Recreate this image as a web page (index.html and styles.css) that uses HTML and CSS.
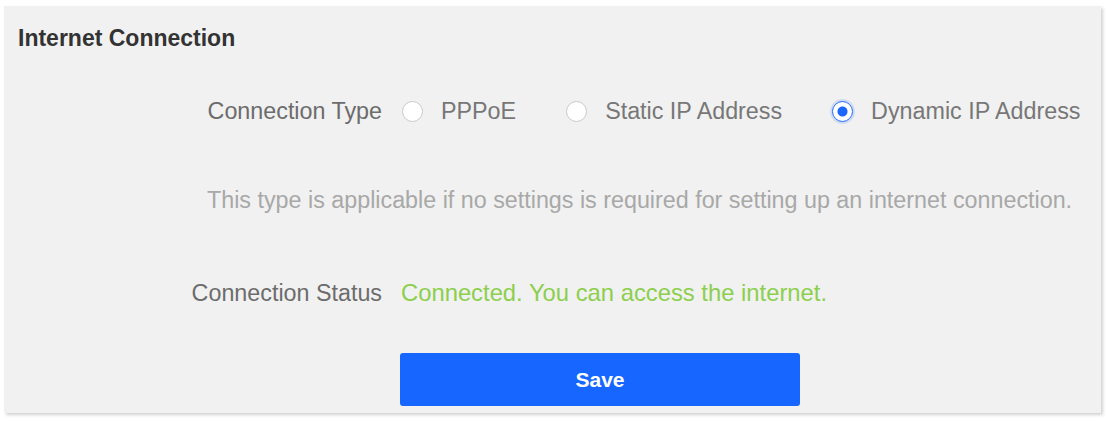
FILE: index.html
```html
<!DOCTYPE html>
<html lang="en">
<head>
    <meta charset="UTF-8">
    <meta name="viewport" content="width=device-width, initial-scale=1.0">
    <title>Internet Connection</title>
    <link rel="stylesheet" href="styles.css">
</head>
<body>
    <div class="panel">
        <h2 class="title">Internet Connection</h2>

        <div class="row">
            <span class="label">Connection Type</span>
            <div class="options">
                <label class="option">
                    <span class="radio"></span>
                    <span>PPPoE</span>
                </label>
                <label class="option">
                    <span class="radio"></span>
                    <span>Static IP Address</span>
                </label>
                <label class="option">
                    <span class="radio checked"></span>
                    <span>Dynamic IP Address</span>
                </label>
            </div>
        </div>

        <p class="hint">This type is applicable if no settings is required for setting up an internet connection.</p>

        <div class="row status-row">
            <span class="label">Connection Status</span>
            <span class="status">Connected. You can access the internet.</span>
        </div>

        <div class="actions">
            <button class="save">Save</button>
        </div>
    </div>
</body>
</html>
```

FILE: styles.css
```css
body {
    margin: 0;
    padding: 0;
    background: #fff;
    font-family: 'Liberation Sans', Arial, sans-serif;
}

.panel {
    margin: 6px 5px 8px 4px;
    height: 407px;
    box-sizing: border-box;
    padding-top: 19px;
    background: #f1f1f1;
    box-shadow: 2px 2px 3px rgba(0, 0, 0, 0.18);
}

.title {
    margin: 0 0 0 14px;
    font-size: 23px;
    line-height: 26px;
    font-weight: bold;
    color: #333;
}

.row {
    display: flex;
    align-items: center;
    height: 26px;
    margin-top: 47px;
    font-size: 23.3px;
    white-space: nowrap;
}

.label {
    flex-shrink: 0;
    width: 378px;
    text-align: right;
    color: #6c6c6c;
}

.options {
    display: flex;
    align-items: center;
    gap: 50px;
    margin-left: 20px;
}

.option {
    display: flex;
    align-items: center;
    flex-shrink: 0;
    gap: 18px;
    color: #777;
}

.radio {
    width: 21px;
    height: 21px;
    box-sizing: border-box;
    border: 1px solid #cacaca;
    border-radius: 50%;
    background: #fff;
}

.radio.checked {
    border-color: #1a66ff;
    box-shadow: 0 0 0 2px rgba(26, 102, 255, 0.15);
    background: radial-gradient(circle, #1a66ff 0 4.5px, #fff 5.5px);
}

.hint {
    margin: 63px 0 0 203px;
    font-size: 23.3px;
    line-height: 26px;
    color: #a8a8a8;
}

.status-row {
    margin-top: 67px;
}

.status {
    margin-left: 19px;
    font-size: 23.8px;
    color: #8ccf4d;
}

.actions {
    margin: 47px 0 0 396px;
}

.save {
    width: 400px;
    height: 53px;
    border: none;
    border-radius: 3px;
    background: #1766ff;
    color: #fff;
    font-family: 'Liberation Sans', Arial, sans-serif;
    font-size: 21px;
    font-weight: bold;
}
```
